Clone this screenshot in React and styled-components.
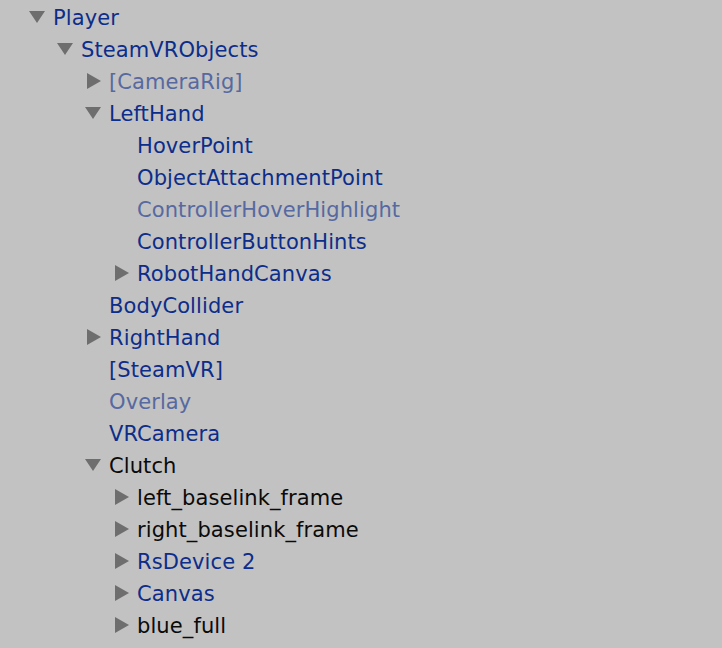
import React from 'react'
import styled, { createGlobalStyle } from 'styled-components'

const Global = createGlobalStyle`
  html, body {
    margin: 0;
    padding: 0;
    background: #c2c2c2;
    overflow: hidden;
  }
`

const Panel = styled.div`
  width: 722px;
  height: 648px;
  padding-top: 1px;
  box-sizing: border-box;
  background: #c2c2c2;
  overflow: hidden;
  font-family: "DejaVu Sans", "Lucida Grande", sans-serif;
  font-size: 21px;
`

const Row = styled.div`
  height: 32px;
  display: flex;
  align-items: center;
  padding-left: ${p => 53 + p.depth * 28}px;
`

const Toggle = styled.span`
  width: 25px;
  height: 32px;
  display: flex;
  align-items: center;
  justify-content: flex-start;
  margin-left: -25px;
  flex-shrink: 0;
  svg.closed {
    margin-left: 2px;
  }
`

const Label = styled.span`
  padding-top: 2px;
  white-space: nowrap;
  letter-spacing: 0.1px;
  color: ${p =>
    p.tone === 'dim' ? '#5669a1' : p.tone === 'black' ? '#0a0a0a' : '#0c2d8a'};
`

function Arrow({ open }) {
  return open ? (
    <svg width="18" height="14" viewBox="0 0 18 14">
      <polygon points="1,1 17,1 9,13" fill="#6e6e6e" />
    </svg>
  ) : (
    <svg className="closed" width="16" height="18" viewBox="0 0 16 18">
      <polygon points="1,1 15,9 1,17" fill="#6e6e6e" />
    </svg>
  )
}

const items = [
  { d: 0, t: 'Player', a: 'open' },
  { d: 1, t: 'SteamVRObjects', a: 'open' },
  { d: 2, t: '[CameraRig]', a: 'closed', tone: 'dim' },
  { d: 2, t: 'LeftHand', a: 'open' },
  { d: 3, t: 'HoverPoint' },
  { d: 3, t: 'ObjectAttachmentPoint' },
  { d: 3, t: 'ControllerHoverHighlight', tone: 'dim' },
  { d: 3, t: 'ControllerButtonHints' },
  { d: 3, t: 'RobotHandCanvas', a: 'closed' },
  { d: 2, t: 'BodyCollider' },
  { d: 2, t: 'RightHand', a: 'closed' },
  { d: 2, t: '[SteamVR]' },
  { d: 2, t: 'Overlay', tone: 'dim' },
  { d: 2, t: 'VRCamera' },
  { d: 2, t: 'Clutch', a: 'open', tone: 'black' },
  { d: 3, t: 'left_baselink_frame', a: 'closed', tone: 'black' },
  { d: 3, t: 'right_baselink_frame', a: 'closed', tone: 'black' },
  { d: 3, t: 'RsDevice 2', a: 'closed' },
  { d: 3, t: 'Canvas', a: 'closed' },
  { d: 3, t: 'blue_full', a: 'closed', tone: 'black' },
  { d: 2, t: 'NoSteamVRFallbackObjects', tone: 'dim' },
]

export default function App() {
  return (
    <Panel>
      <Global />
      {items.map((it, i) => (
        <Row key={i} depth={it.d}>
          {it.a && (
            <Toggle>
              <Arrow open={it.a === 'open'} />
            </Toggle>
          )}
          <Label tone={it.tone}>{it.t}</Label>
        </Row>
      ))}
    </Panel>
  )
}
